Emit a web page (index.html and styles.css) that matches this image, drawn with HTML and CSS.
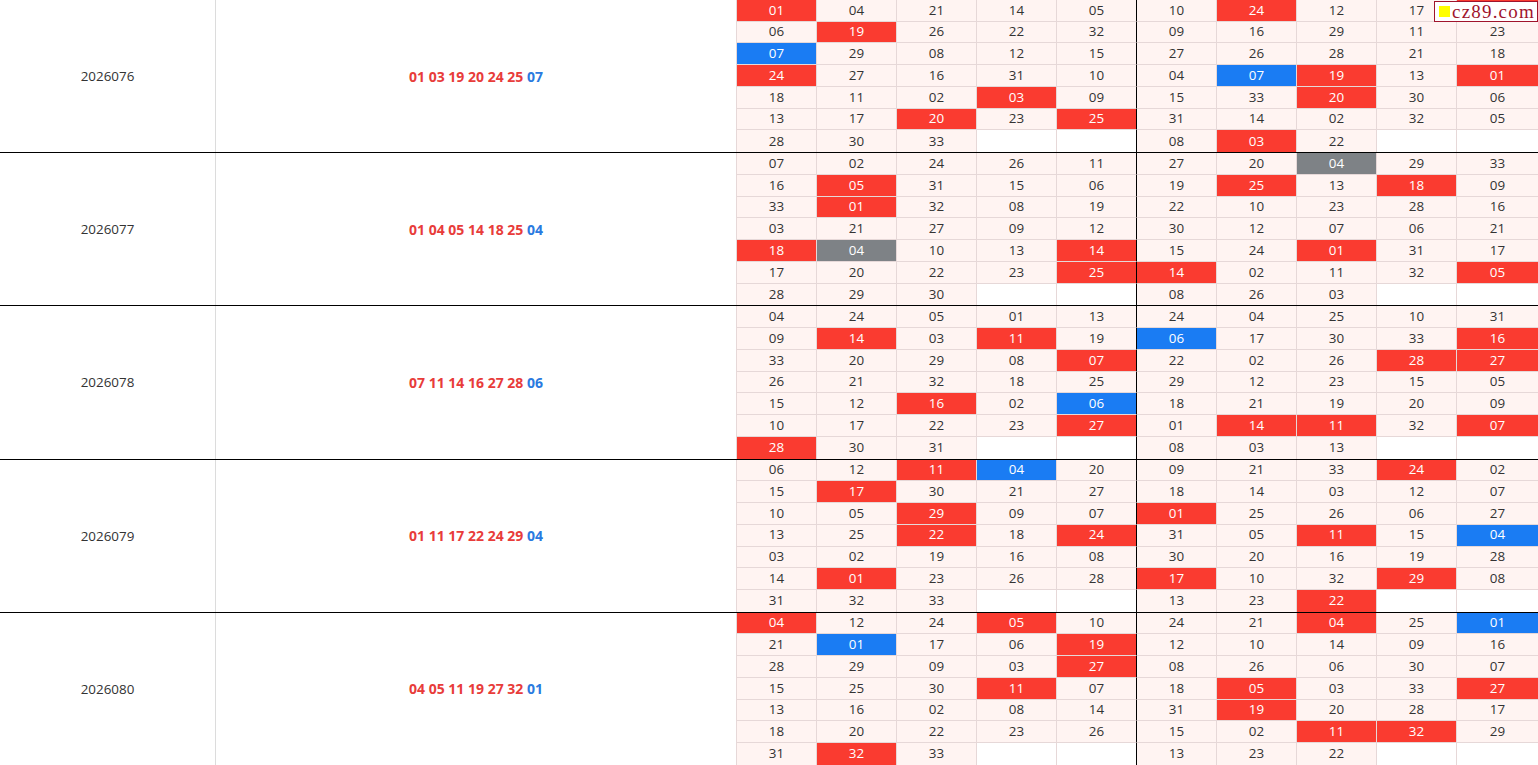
FILE: index.html
```html
<!DOCTYPE html>
<html lang="zh-CN">
<head>
<meta charset="utf-8">
<title>双色球 走势</title>
<link rel="stylesheet" href="styles.css">
</head>
<body>
<div class="mark"><span class="sq"></span><span class="mt">cz89.com</span></div>
<div class="table">

<div class="row">
  <div class="issue">2026076</div>
  <div class="draw"><span class="nums"><span class="red">01 03 19 20 24 25</span> <span class="blue">07</span></span></div>
  <div class="grid">
    <span class="r">01</span><span>04</span><span>21</span><span>14</span><span>05</span><span>10</span><span class="r">24</span><span>12</span><span>17</span><span class="r"></span>
    <span>06</span><span class="r">19</span><span>26</span><span>22</span><span>32</span><span>09</span><span>16</span><span>29</span><span>11</span><span>23</span>
    <span class="b">07</span><span>29</span><span>08</span><span>12</span><span>15</span><span>27</span><span>26</span><span>28</span><span>21</span><span>18</span>
    <span class="r">24</span><span>27</span><span>16</span><span>31</span><span>10</span><span>04</span><span class="b">07</span><span class="r">19</span><span>13</span><span class="r">01</span>
    <span>18</span><span>11</span><span>02</span><span class="r">03</span><span>09</span><span>15</span><span>33</span><span class="r">20</span><span>30</span><span>06</span>
    <span>13</span><span>17</span><span class="r">20</span><span>23</span><span class="r">25</span><span>31</span><span>14</span><span>02</span><span>32</span><span>05</span>
    <span>28</span><span>30</span><span>33</span><span class="e"></span><span class="e"></span><span>08</span><span class="r">03</span><span>22</span><span class="e"></span><span class="e"></span>
  </div>
</div>

<div class="row">
  <div class="issue">2026077</div>
  <div class="draw"><span class="nums"><span class="red">01 04 05 14 18 25</span> <span class="blue">04</span></span></div>
  <div class="grid">
    <span>07</span><span>02</span><span>24</span><span>26</span><span>11</span><span>27</span><span>20</span><span class="g">04</span><span>29</span><span>33</span>
    <span>16</span><span class="r">05</span><span>31</span><span>15</span><span>06</span><span>19</span><span class="r">25</span><span>13</span><span class="r">18</span><span>09</span>
    <span>33</span><span class="r">01</span><span>32</span><span>08</span><span>19</span><span>22</span><span>10</span><span>23</span><span>28</span><span>16</span>
    <span>03</span><span>21</span><span>27</span><span>09</span><span>12</span><span>30</span><span>12</span><span>07</span><span>06</span><span>21</span>
    <span class="r">18</span><span class="g">04</span><span>10</span><span>13</span><span class="r">14</span><span>15</span><span>24</span><span class="r">01</span><span>31</span><span>17</span>
    <span>17</span><span>20</span><span>22</span><span>23</span><span class="r">25</span><span class="r">14</span><span>02</span><span>11</span><span>32</span><span class="r">05</span>
    <span>28</span><span>29</span><span>30</span><span class="e"></span><span class="e"></span><span>08</span><span>26</span><span>03</span><span class="e"></span><span class="e"></span>
  </div>
</div>

<div class="row">
  <div class="issue">2026078</div>
  <div class="draw"><span class="nums"><span class="red">07 11 14 16 27 28</span> <span class="blue">06</span></span></div>
  <div class="grid">
    <span>04</span><span>24</span><span>05</span><span>01</span><span>13</span><span>24</span><span>04</span><span>25</span><span>10</span><span>31</span>
    <span>09</span><span class="r">14</span><span>03</span><span class="r">11</span><span>19</span><span class="b">06</span><span>17</span><span>30</span><span>33</span><span class="r">16</span>
    <span>33</span><span>20</span><span>29</span><span>08</span><span class="r">07</span><span>22</span><span>02</span><span>26</span><span class="r">28</span><span class="r">27</span>
    <span>26</span><span>21</span><span>32</span><span>18</span><span>25</span><span>29</span><span>12</span><span>23</span><span>15</span><span>05</span>
    <span>15</span><span>12</span><span class="r">16</span><span>02</span><span class="b">06</span><span>18</span><span>21</span><span>19</span><span>20</span><span>09</span>
    <span>10</span><span>17</span><span>22</span><span>23</span><span class="r">27</span><span>01</span><span class="r">14</span><span class="r">11</span><span>32</span><span class="r">07</span>
    <span class="r">28</span><span>30</span><span>31</span><span class="e"></span><span class="e"></span><span>08</span><span>03</span><span>13</span><span class="e"></span><span class="e"></span>
  </div>
</div>

<div class="row">
  <div class="issue">2026079</div>
  <div class="draw"><span class="nums"><span class="red">01 11 17 22 24 29</span> <span class="blue">04</span></span></div>
  <div class="grid">
    <span>06</span><span>12</span><span class="r">11</span><span class="b">04</span><span>20</span><span>09</span><span>21</span><span>33</span><span class="r">24</span><span>02</span>
    <span>15</span><span class="r">17</span><span>30</span><span>21</span><span>27</span><span>18</span><span>14</span><span>03</span><span>12</span><span>07</span>
    <span>10</span><span>05</span><span class="r">29</span><span>09</span><span>07</span><span class="r">01</span><span>25</span><span>26</span><span>06</span><span>27</span>
    <span>13</span><span>25</span><span class="r">22</span><span>18</span><span class="r">24</span><span>31</span><span>05</span><span class="r">11</span><span>15</span><span class="b">04</span>
    <span>03</span><span>02</span><span>19</span><span>16</span><span>08</span><span>30</span><span>20</span><span>16</span><span>19</span><span>28</span>
    <span>14</span><span class="r">01</span><span>23</span><span>26</span><span>28</span><span class="r">17</span><span>10</span><span>32</span><span class="r">29</span><span>08</span>
    <span>31</span><span>32</span><span>33</span><span class="e"></span><span class="e"></span><span>13</span><span>23</span><span class="r">22</span><span class="e"></span><span class="e"></span>
  </div>
</div>

<div class="row">
  <div class="issue">2026080</div>
  <div class="draw"><span class="nums"><span class="red">04 05 11 19 27 32</span> <span class="blue">01</span></span></div>
  <div class="grid">
    <span class="r">04</span><span>12</span><span>24</span><span class="r">05</span><span>10</span><span>24</span><span>21</span><span class="r">04</span><span>25</span><span class="b">01</span>
    <span>21</span><span class="b">01</span><span>17</span><span>06</span><span class="r">19</span><span>12</span><span>10</span><span>14</span><span>09</span><span>16</span>
    <span>28</span><span>29</span><span>09</span><span>03</span><span class="r">27</span><span>08</span><span>26</span><span>06</span><span>30</span><span>07</span>
    <span>15</span><span>25</span><span>30</span><span class="r">11</span><span>07</span><span>18</span><span class="r">05</span><span>03</span><span>33</span><span class="r">27</span>
    <span>13</span><span>16</span><span>02</span><span>08</span><span>14</span><span>31</span><span class="r">19</span><span>20</span><span>28</span><span>17</span>
    <span>18</span><span>20</span><span>22</span><span>23</span><span>26</span><span>15</span><span>02</span><span class="r">11</span><span class="r">32</span><span>29</span>
    <span>31</span><span class="r">32</span><span>33</span><span class="e"></span><span class="e"></span><span>13</span><span>23</span><span>22</span><span class="e"></span><span class="e"></span>
  </div>
</div>

</div>
</body>
</html>
```

FILE: styles.css
```css
html, body {
  margin: 0;
  padding: 0;
  background: #fff;
}
body {
  font-family: "Open Sans", "Noto Sans", "Noto Sans CJK SC", sans-serif;
  font-size: 13.4px;
  color: #333;
}
.table {
  display: flex;
  flex-direction: column;
  width: 1538px;
}
.row {
  display: flex;
  height: 153.2px;
  box-sizing: border-box;
  border-bottom: 1px solid #000;
}
.issue {
  width: 216px;
  box-sizing: border-box;
  border-right: 1px solid #dcdcdc;
  display: flex;
  align-items: center;
  justify-content: center;
  color: #333;
}
.draw {
  width: 520px;
  display: flex;
  align-items: center;
  justify-content: center;
  font-weight: 700;
  font-size: 14px;
}
.draw .nums { white-space: pre; }
.draw .red { color: #e83c3a; }
.draw .blue { color: #2a7ae0; }
.grid {
  flex: 1;
  display: grid;
  grid-template-columns: repeat(9, 80px) 1fr;
  grid-template-rows: repeat(7, 1fr);
}
.grid span {
  display: flex;
  align-items: center;
  justify-content: center;
  background: #fff4f2;
  border-left: 1px solid #e6d8d8;
  border-bottom: 1px solid #e6d8d8;
  color: #333;
  line-height: 1;
}
.grid span:nth-child(10n+6) {
  border-left-color: #000;
}
.grid span:nth-child(n+61) {
  border-bottom: 0;
}
.grid span.e { background: #fff; }
.grid span.r { background: #fa3b30; color: #fff; }
.grid span.b { background: #1a7cf3; color: #fff; }
.grid span.g { background: #7e8286; color: #fff; }
.mark {
  position: absolute;
  top: 1px;
  right: 0;
  width: 104px;
  height: 21px;
  box-sizing: border-box;
  border: 1px solid #a0142c;
  background: #fff;
  display: flex;
  align-items: center;
  gap: 2px;
  padding-left: 4px;
  font-family: "Liberation Serif", serif;
  font-size: 19px;
  color: #a0142c;
  line-height: 1;
}
.mark .mt { letter-spacing: 1.2px; }
.mark .sq {
  width: 11px;
  height: 11px;
  background: #ffff00;
  flex: none;
}
```
